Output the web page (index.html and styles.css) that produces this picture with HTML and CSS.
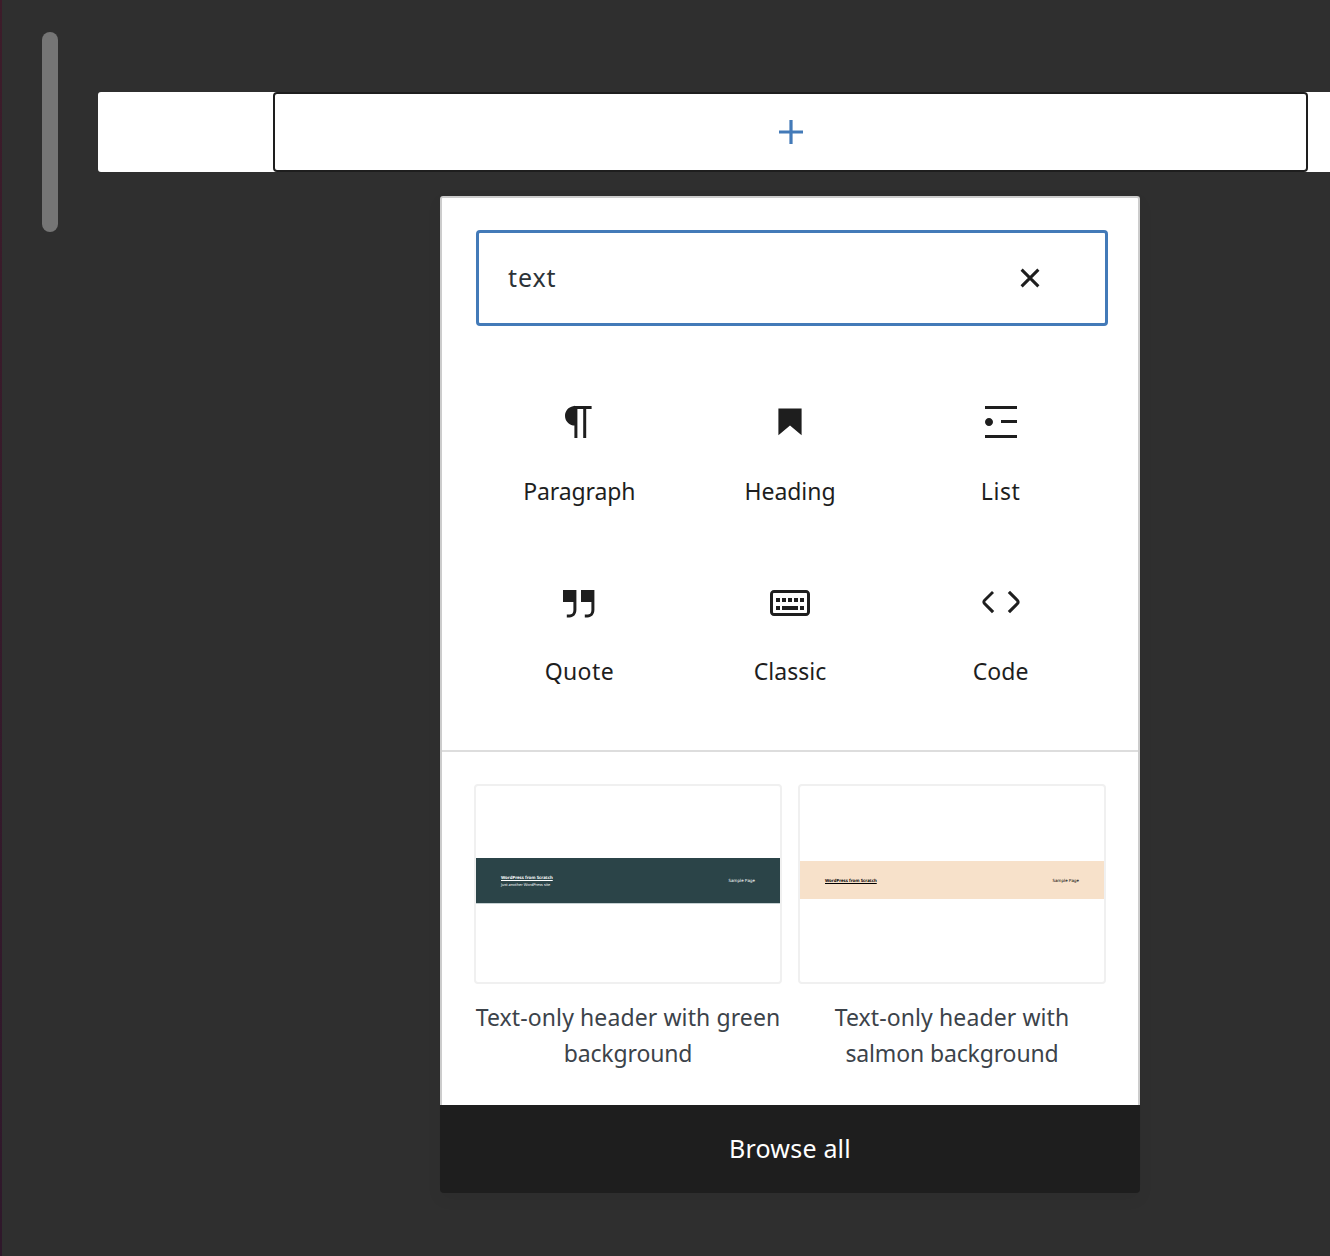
FILE: index.html
```html
<!DOCTYPE html>
<html lang="en">
<head>
<meta charset="utf-8">
<title>Block inserter</title>
<link rel="stylesheet" href="styles.css">
</head>
<body>
<div class="editor">
  <div class="title-cursor"></div>
  <main class="content">
    <div class="row">
      <button class="appender" aria-label="Add block">
        <svg class="icon" viewBox="0 0 24 24"><path d="M18 11.2h-5.2V6h-1.6v5.2H6v1.6h5.2V18h1.6v-5.2H18z"/></svg>
      </button>
    </div>
    <section class="inserter">
      <div class="panel">
        <div class="search">
          <span class="search-text">text</span>
          <svg class="icon" viewBox="0 0 24 24"><path class="cross" d="M7.8 7.8l8.4 8.4M16.2 7.8l-8.4 8.4"/></svg>
        </div>
        <div class="blocks">
          <div class="block">
            <svg class="icon" viewBox="0 0 24 24"><path d="M18.3 4H9.9v-.1l-.9.2c-2.3.4-4 2.4-4 4.8s1.7 4.4 4 4.8l.7.1V20h1.5V5.5h2.9V20h1.5V5.5h2.7V4z"/></svg>
            <span class="label paragraph">Paragraph</span>
          </div>
          <div class="block">
            <svg class="icon" viewBox="0 0 24 24"><path d="M6.2 5.2v13.4l5.8-4.8 5.8 4.8V5.2z"/></svg>
            <span class="label heading">Heading</span>
          </div>
          <div class="block">
            <svg class="icon" viewBox="0 0 24 24"><path d="M4 4v1.5h16V4H4zm8 8.5h8V11h-8v1.5zM4 20h16v-1.5H4V20zm4-8c0-1.1-.9-2-2-2s-2 .9-2 2 .9 2 2 2 2-.9 2-2z"/></svg>
            <span class="label list">List</span>
          </div>
          <div class="block">
            <svg class="icon" viewBox="0 0 24 24"><path d="M13 6v6h5.2v4c0 .8-.2 1.4-.5 1.7-.6.6-1.6.6-2.5.5h-.3v1.5h.5c1 0 2.3-.1 3.3-1 .6-.6 1-1.6 1-2.8V6H13zm-9 6h5.2v4c0 .8-.2 1.4-.5 1.7-.6.6-1.6.6-2.5.5h-.3v1.5h.5c1 0 2.3-.1 3.3-1 .6-.6 1-1.6 1-2.8V6H4v6z"/></svg>
            <span class="label quote">Quote</span>
          </div>
          <div class="block">
            <svg class="icon" viewBox="0 0 24 24"><path fill-rule="evenodd" d="M4 6h16c1.1 0 2 .9 2 2v9c0 1.1-.9 2-2 2H4c-1.1 0-2-.9-2-2V8c0-1.1.9-2 2-2zm0 1.5c-.3 0-.5.2-.5.5v9c0 .3.2.5.5.5h16c.3 0 .5-.2.5-.5V8c0-.3-.2-.5-.5-.5H4zM5 10h2v2H5zm3 0h2v2H8zm3 0h2v2h-2zm3 0h2v2h-2zm3 0h2v2h-2zM5 14h2v2H5zm3 0h8v2H8zm9 0h2v2h-2z"/></svg>
            <span class="label classic">Classic</span>
          </div>
          <div class="block">
            <svg class="icon" viewBox="0 0 24 24"><path d="M20.8 10.7l-4.3-4.3-1.1 1.1 4.3 4.3c.1.1.1.3 0 .4l-4.3 4.3 1.1 1.1 4.3-4.3c.7-.8.7-1.9 0-2.6zM4.2 11.8l4.3-4.3-1-1-4.3 4.3c-.7.7-.7 1.8 0 2.5l4.3 4.3 1.1-1.1-4.3-4.3c-.2-.1-.2-.3-.1-.4z"/></svg>
            <span class="label code">Code</span>
          </div>
        </div>
        <div class="patterns">
          <div class="pattern">
            <div class="preview">
              <div class="band green">
                <div class="site"><b>WordPress from Scratch</b><small>Just another WordPress site</small></div>
                <span>Sample Page</span>
              </div>
            </div>
            <p class="caption">Text-only header with green <span class="tight">background</span></p>
          </div>
          <div class="pattern">
            <div class="preview">
              <div class="band salmon">
                <div class="site"><b>WordPress from Scratch</b></div>
                <span>Sample Page</span>
              </div>
            </div>
            <p class="caption">Text-only header with <span class="tight">salmon background</span></p>
          </div>
        </div>
      </div>
      <button class="browse">Browse all</button>
    </section>
  </main>
</div>
</body>
</html>
```
FILE: styles.css
```css
* { box-sizing: border-box; }

body {
  margin: 0;
  height: 1256px;
  overflow: hidden;
  background: #2f2f2f;
  color: #1e1e1e;
  font-family: "Noto Sans", sans-serif;
}

button { border: 0; font: inherit; }

.editor {
  display: flex;
  height: 100%;
  border-left: 2px solid;
  border-image: linear-gradient(#3d1c2a, #2f182b) 1;
}

.title-cursor {
  width: 16px;
  height: 200px;
  margin: 32px 40px 0;
  border-radius: 8px;
  background: #757575;
}

.content { flex: 1; padding-top: 92px; }

.row {
  display: flex;
  height: 80px;
  padding: 0 22px 0 175px;
  border-radius: 3px 0 0 3px;
  background: #fff;
}

.appender {
  flex: 1;
  display: flex;
  align-items: center;
  justify-content: center;
  padding: 0;
  border: 2px solid #1e1e1e;
  border-radius: 4px;
  background: #fff;
}

.appender .icon { fill: #437ab8; }

.icon { display: block; width: 48px; height: 48px; fill: #1e1e1e; }

.cross { fill: none; stroke: #1e1e1e; stroke-width: 1.5; }

.inserter {
  width: 700px;
  margin: 24px 0 0 342px;
  border-radius: 4px;
  box-shadow: 0 6px 16px rgba(0, 0, 0, .05);
}

.panel {
  height: 909px;
  padding-top: 32px;
  border: 2px solid #ccc;
  border-bottom: 0;
  border-radius: 3px 3px 0 0;
  background: #fff;
}

.search {
  display: flex;
  align-items: center;
  justify-content: space-between;
  width: 632px;
  height: 96px;
  margin-left: 34px;
  padding: 0 51px 0 29px;
  border: 3px solid #437ab8;
  border-radius: 4px;
}

.search-text {
  padding-bottom: 2px;
  font-size: 25px;
  letter-spacing: .9px;
  color: #2c3338;
}

.blocks {
  display: grid;
  grid-template-columns: repeat(3, 1fr);
  grid-auto-rows: 180px;
  height: 424px;
  padding: 34px 32px 0;
}

.block {
  display: flex;
  flex-direction: column;
  align-items: center;
  gap: 27px;
  padding-top: 38px;
}

.label { font-size: 23px; line-height: 36px; }
.paragraph { letter-spacing: -.1px; }
.heading { letter-spacing: -.05px; }
.list { letter-spacing: .6px; }
.quote { letter-spacing: .4px; }
.classic { letter-spacing: .05px; }
.code { letter-spacing: .1px; }

.patterns {
  display: flex;
  gap: 16px;
  padding: 32px;
  border-top: 2px solid #ddd;
}

.pattern { width: 308px; }

.preview {
  display: flex;
  flex-direction: column;
  justify-content: center;
  height: 200px;
  border: 2px solid #f0f0f0;
  border-radius: 4px;
}

.band {
  display: flex;
  align-items: center;
  justify-content: space-between;
  padding: 2px 25px 0;
  font-size: 4.35px;
  line-height: 7px;
  text-rendering: geometricPrecision;
}

.green {
  height: 46px;
  margin-top: -6px;
  border-bottom: 1px solid #c5d0d2;
  background: #2b4448;
  color: #fff;
}

.salmon {
  height: 38px;
  margin-top: -8px;
  background: #f7e1ca;
  color: #000;
}

.site { display: flex; flex-direction: column; }
.site b { text-decoration: underline; }
.site small { font-size: 3.8px; }

.caption {
  margin: 15px -4px 0;
  text-align: center;
  font-size: 23px;
  line-height: 36px;
  letter-spacing: .1px;
  color: #3c434a;
}

.pattern:last-child .caption { padding: 0 20px; }
.tight { letter-spacing: -.14px; }

.browse {
  display: block;
  width: 100%;
  height: 88px;
  padding: 0 0 2px;
  border-radius: 0 0 4px 4px;
  background: #1e1e1e;
  color: #fff;
  font-size: 25px;
  letter-spacing: .2px;
}
```
